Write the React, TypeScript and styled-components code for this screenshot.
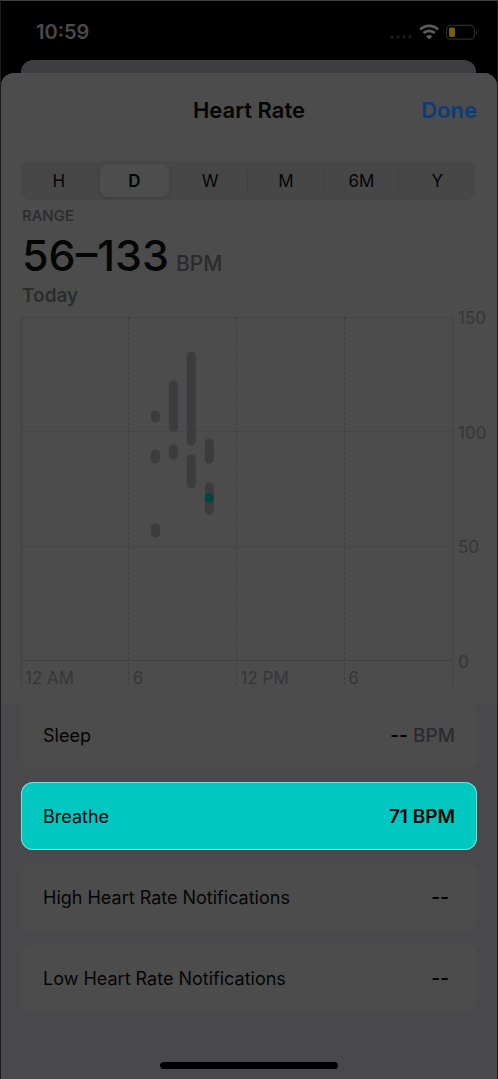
import React, { useState } from "react";
import styled, { createGlobalStyle } from "styled-components";

const GlobalStyle = createGlobalStyle`
  *, *::before, *::after { box-sizing: border-box; }
  body {
    margin: 0;
    background: #000;
    font-family: Inter, Roboto, "Liberation Sans", sans-serif;
    color: #050505;
  }
  h1, h2, p, ul, dl, dd, dt { margin: 0; padding: 0; }
`;

const Screen = styled.div`
  display: flex;
  flex-direction: column;
  min-height: 100vh;
  background: #000;
  border: 1px solid #1c1c1d;
  border-top-color: #404040;
  border-bottom: 0;
`;

const StatusBar = styled.header`
  display: flex;
  align-items: center;
  justify-content: space-between;
  height: 59px;
  padding: 2px 20px 0 35px;
`;

const Clock = styled.time`
  font-size: 20px;
  line-height: 24px;
  font-weight: 600;
  color: #4a4a4a;
`;

const StatusIcons = styled.svg`
  display: block;
  width: 90px;
  height: 20px;
`;

const BackSheet = styled.div`
  height: 13px;
  margin: 0 21px 0 20px;
  border-radius: 12px 12px 0 0;
  background: #3e3e40;
`;

const Sheet = styled.main`
  flex: 1;
  display: flex;
  flex-direction: column;
  border-radius: 13px 13px 0 0;
  background: #49494b;
  overflow: hidden;
`;

const Panel = styled.section`
  padding: 0 0 15px 20px;
  background: #4c4c4c;
`;

const TitleBar = styled.div`
  display: grid;
  grid-template-columns: 1fr auto 1fr;
  align-items: center;
  height: 74px;
  padding: 0 20px 0 0;
`;

const Title = styled.h1`
  grid-column: 2;
  font-size: 22px;
  line-height: 28px;
  font-weight: 600;
`;

const DoneButton = styled.button`
  justify-self: end;
  padding: 0;
  border: 0;
  background: none;
  font: inherit;
  font-size: 22px;
  line-height: 28px;
  font-weight: 600;
  color: #0b3c78;
`;

const Segments = styled.div`
  display: grid;
  grid-template-columns: repeat(6, 1fr);
  height: 39px;
  margin: 14px 22px 0 0;
  padding: 3px 0;
  border-radius: 10px;
  background: #474748;
`;

const Segment = styled.button<{ $active: boolean; $divided: boolean }>`
  position: relative;
  margin: 0 3px;
  padding: 0;
  border: 0;
  border-radius: 8px;
  background: ${(p) => (p.$active ? "#4d4d4d" : "none")};
  box-shadow: ${(p) => (p.$active ? "0 1px 4px rgba(0, 0, 0, 0.12)" : "none")};
  font: inherit;
  font-size: 17px;
  line-height: 20px;
  font-weight: ${(p) => (p.$active ? 600 : 400)};
  color: #050505;

  &::before {
    content: "";
    display: ${(p) => (p.$divided ? "block" : "none")};
    position: absolute;
    left: -4px;
    top: 6px;
    bottom: 6px;
    width: 1px;
    background: #414142;
  }
`;

const Summary = styled.div`
  padding: 6px 0 0 1px;
`;

const Caption = styled.p`
  font-size: 15px;
  line-height: 20px;
  font-weight: 500;
  color: #2b2b2d;
`;

const Reading = styled.p`
  display: flex;
  align-items: baseline;
  gap: 7px;
  font-size: 43px;
  line-height: 58px;
  font-weight: 500;
`;

const Unit = styled.span`
  font-size: 21px;
  line-height: 28px;
  font-weight: 500;
  color: #2b2b2d;
`;

const Today = styled.p`
  font-size: 19px;
  line-height: 24px;
  font-weight: 600;
  color: #2b2b2d;
`;

const ChartRow = styled.div`
  display: flex;
  height: 381px;
`;

const Plot = styled.svg`
  flex: 1;
  min-width: 0;
  height: 381px;
  overflow: visible;
  font-size: 17px;
  font-weight: 400;
`;

const Scale = styled.ul`
  flex: none;
  display: flex;
  flex-direction: column;
  justify-content: space-between;
  width: 45px;
  height: 364px;
  padding-left: 6px;
  list-style: none;
  font-size: 17px;
  line-height: 20px;
  color: #363637;
`;

const List = styled.dl`
  flex: 1;
  display: flex;
  flex-direction: column;
  gap: 13px;
  padding: 0 20px 48px;
  overflow: hidden;
`;

const Card = styled.div<{ $selected: boolean }>`
  display: flex;
  align-items: center;
  justify-content: space-between;
  height: 68px;
  padding: 1px 22px 0;
  border-radius: 12px;
  background: ${(p) => (p.$selected ? "#00c8c0" : "#4c4c4c")};
  box-shadow: ${(p) => (p.$selected ? "inset 0 0 0 1px #7fdeda" : "none")};
  font-size: 18px;
  line-height: 24px;

  &:first-child {
    margin-top: -3px;
  }
`;

const Value = styled.dd<{ $inset: boolean }>`
  padding-right: ${(p) => (p.$inset ? 6 : 0)}px;
  font-size: 19px;
  font-weight: 600;
`;

const Muted = styled.span`
  font-weight: 500;
  color: #2b2b2d;
`;

const HomeIndicator = styled.div`
  align-self: center;
  width: 178px;
  height: 7px;
  margin-bottom: 10px;
  border-radius: 4px;
  background: #000;
`;

const ranges = ["H", "D", "W", "M", "6M", "Y"];

// Column centre as a share of the day, then top and bottom of the range in px.
const bars: [number, number, number][] = [
  [31.2, 102, 114],
  [31.2, 141, 155],
  [31.2, 215, 229],
  [35.4, 72, 123],
  [35.4, 136, 151],
  [39.5, 43, 137],
  [39.5, 146, 180],
  [43.7, 130, 155],
  [43.7, 174, 206],
];

const gridY = [9, 123, 238, 352];
const scaleLabels = ["150", "100", "50", "0"];
const hours = ["12 AM", "6", "12 PM", "6"];

const rows = [
  { name: "Sleep", value: "--", unit: "BPM" },
  { name: "Breathe", value: "71 BPM" },
  { name: "High Heart Rate Notifications", value: "--" },
  { name: "Low Heart Rate Notifications", value: "--" },
];

function Status() {
  return (
    <StatusIcons viewBox="0 0 90 20" role="img" aria-label="Wi-Fi on, battery low">
      {[4, 10, 16, 22].map((x) => (
        <circle key={x} cx={x + 1} cy="15" r="1.7" fill="#1b1b1b" />
      ))}
      <g fill="none" stroke="#5b5b5b" strokeWidth="2.7">
        <path d="M33.2 7.4a13.2 13.2 0 0 1 18 0" />
        <path d="M36.6 11a8.2 8.2 0 0 1 11.2 0" />
      </g>
      <path d="M42.2 17.6l-3.1-3.2a4.5 4.5 0 0 1 6.2 0z" fill="#5b5b5b" />
      <rect x="59.6" y="3.4" width="27.8" height="13.8" rx="4" fill="none" stroke="#2a2a2a" strokeWidth="1.2" />
      <rect x="62" y="5.6" width="6" height="9.4" rx="1.6" fill="#6f6408" />
      <path d="M89 8.2v4.6c1.3-.6 1.3-4 0-4.6z" fill="#2a2a2a" />
    </StatusIcons>
  );
}

function Chart() {
  return (
    <ChartRow>
      <Plot role="img" aria-label="Heart rate range by hour, today">
        {gridY.map((y, i) => (
          <line key={y} x1="0" x2="100%" y1={y + 0.5} y2={y + 0.5} stroke={i === 3 ? "#404041" : "#454546"} />
        ))}
        {[0, 25, 50, 75, 100].map((x) => (
          <line
            key={x}
            x1={`${x}%`}
            x2={`${x}%`}
            y1="9"
            y2="379"
            stroke={x % 100 ? "#3f3f40" : "#424243"}
            strokeDasharray={x % 100 ? "3 2" : undefined}
            shapeRendering="crispEdges"
          />
        ))}
        {bars.map(([x, top, bottom]) => (
          <line
            key={`${x}-${top}`}
            x1={`${x}%`}
            x2={`${x}%`}
            y1={top + 5}
            y2={bottom - 4}
            stroke="#3c3c3e"
            strokeWidth="9"
            strokeLinecap="round"
          />
        ))}
        <circle cx="43.7%" cy="190" r="4.7" fill="#00463f" />
        {hours.map((label, i) => (
          <text key={i} x={`${i * 25}%`} y="376" dx="4" fill="#363637">
            {label}
          </text>
        ))}
      </Plot>
      <Scale>
        {scaleLabels.map((label) => (
          <li key={label}>{label}</li>
        ))}
      </Scale>
    </ChartRow>
  );
}

export default function App() {
  const [range, setRange] = useState("D");
  const active = ranges.indexOf(range);

  return (
    <>
      <GlobalStyle />
      <Screen>
        <StatusBar>
          <Clock>10:59</Clock>
          <Status />
        </StatusBar>
        <BackSheet />
        <Sheet>
          <Panel>
            <TitleBar>
              <Title>Heart Rate</Title>
              <DoneButton type="button">Done</DoneButton>
            </TitleBar>
            <Segments role="group" aria-label="Time range">
              {ranges.map((label, i) => (
                <Segment
                  key={label}
                  type="button"
                  aria-pressed={i === active}
                  $active={i === active}
                  $divided={i > 0 && i !== active && i !== active + 1}
                  onClick={() => setRange(label)}
                >
                  {label}
                </Segment>
              ))}
            </Segments>
            <Summary>
              <Caption>RANGE</Caption>
              <Reading>
                56–133 <Unit>BPM</Unit>
              </Reading>
              <Today>Today</Today>
            </Summary>
            <Chart />
          </Panel>
          <List>
            {rows.map((row) => (
              <Card key={row.name} $selected={row.name === "Breathe"}>
                <dt>{row.name}</dt>
                <Value $inset={row.value === "--" && !row.unit}>
                  {row.value}
                  {row.unit && <Muted> {row.unit}</Muted>}
                </Value>
              </Card>
            ))}
          </List>
          <HomeIndicator />
        </Sheet>
      </Screen>
    </>
  );
}
